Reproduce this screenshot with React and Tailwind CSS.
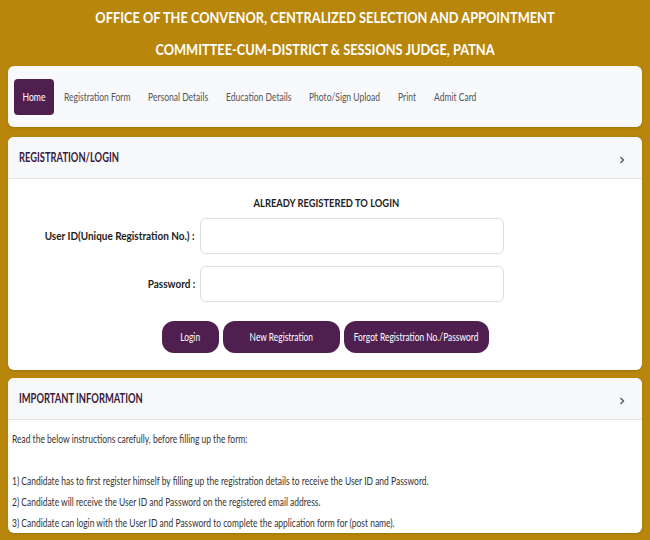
import React from 'react';

// widths measured off the reference so the condensed labels keep their spots
const navItems = [
  { label: 'Registration Form', w: 'w-[66px]' },
  { label: 'Personal Details', w: 'w-[60px]' },
  { label: 'Education Details', w: 'w-[65px]' },
  { label: 'Photo/Sign Upload', w: 'w-[71px]' },
  { label: 'Print', w: 'w-[18px]' },
  { label: 'Admit Card', w: 'w-[43px]' },
];

const instructions = [
  '1) Candidate has to first register himself by filling up the registration details to receive the User ID and Password.',
  '2) Candidate will receive the User ID and Password on the registered email address.',
  '3) Candidate can login with the User ID and Password to complete the application form for (post name).',
];

function Chevron() {
  return (
    <svg width="8" height="10" viewBox="0 0 8 10" className="text-gray-600">
      <path d="M2.5 2 L5.5 5 L2.5 8" fill="none" stroke="currentColor" strokeWidth="1.3" />
    </svg>
  );
}

function PanelHeader({ title }) {
  return (
    <div className="bg-[#f7f8fa] h-[42px] pl-[11px] pr-[16px] flex items-center justify-between border-b border-[#e3e4e8]">
      <span className="inline-block whitespace-nowrap origin-left scale-x-[0.72] font-bold text-[13px] text-[#3a1a3a]">{title}</span>
      <span className="pt-1"><Chevron /></span>
    </div>
  );
}

function PurpleButton({ w, children }) {
  return (
    <button className={`bg-[#4f1f4f] rounded-[12px] h-[32px] ${w} flex items-center justify-center`}>
      <span className="inline-block shrink-0 whitespace-nowrap scale-x-[0.7]">{children}</span>
    </button>
  );
}

export default function App() {
  return (
    <div className="min-h-[540px] bg-[#b8860b] px-2 pb-4 font-['Lato',sans-serif]">
      {/* Title */}
      <div className="pt-[1px] pb-[1px] text-center text-white font-bold text-[16px] leading-[32px]">
        <div className="whitespace-nowrap scale-x-[0.8]">OFFICE OF THE CONVENOR, CENTRALIZED SELECTION AND APPOINTMENT</div>
        <div className="whitespace-nowrap scale-x-[0.8]">COMMITTEE-CUM-DISTRICT &amp; SESSIONS JUDGE, PATNA</div>
      </div>

      {/* Nav */}
      <div className="bg-[#f8f9fc] rounded-md h-[61px] px-[6px] flex items-center gap-[10px] shadow-sm">
        <div className="bg-[#4f1f4f] text-white rounded-[4px] h-[36px] w-[40px] flex items-center justify-center text-[12px]">
          <span className="inline-block scale-x-[0.72]">Home</span>
        </div>
        <div className="flex items-center gap-[18px] text-[12px] text-[#555]">
          {navItems.map((n) => (
            <span key={n.label} className={`${n.w} shrink-0`}>
              <span className="inline-block whitespace-nowrap origin-left scale-x-[0.71]">{n.label}</span>
            </span>
          ))}
        </div>
      </div>

      {/* Registration card */}
      <div className="mt-[10px] bg-white rounded-md overflow-hidden shadow-sm">
        <PanelHeader title="REGISTRATION/LOGIN" />
        <div className="pt-[12px] pb-[17px]">
          <div className="text-center font-bold text-[12px] text-[#222] leading-[24px] pl-[2px]">
            <span className="inline-block whitespace-nowrap scale-x-[0.78]">ALREADY REGISTERED TO LOGIN</span>
          </div>
          <div className="mt-[3px] flex items-center">
            <label className="w-[189px] text-right font-bold text-[12px] text-[#222] pr-[2px]">
              <span className="inline-block whitespace-nowrap origin-right scale-x-[0.83]">User ID(Unique Registration No.) :</span>
            </label>
            <div className="ml-[3px] w-[304px] h-[36px] border border-[#dcdde2] rounded-md bg-white"></div>
          </div>
          <div className="mt-[12px] flex items-center">
            <label className="w-[189px] text-right font-bold text-[12px] text-[#222] pr-[2px]">
              <span className="inline-block whitespace-nowrap origin-right scale-x-[0.83]">Password :</span>
            </label>
            <div className="ml-[3px] w-[304px] h-[36px] border border-[#dcdde2] rounded-md bg-white"></div>
          </div>
          <div className="mt-[19px] flex justify-center gap-[4px] text-[12px] text-white">
            <PurpleButton w="w-[57px]">Login</PurpleButton>
            <PurpleButton w="w-[117px]">New Registration</PurpleButton>
            <PurpleButton w="w-[145px]">Forgot Registration No./Password</PurpleButton>
          </div>
        </div>
      </div>

      {/* Important information */}
      <div className="mt-[8px] bg-white rounded-md overflow-hidden shadow-sm">
        <PanelHeader title="IMPORTANT INFORMATION" />
        <div className="px-[4px] pt-[8px] text-[11px] text-[#333] leading-[21px]">
          <div className="whitespace-nowrap origin-left scale-x-[0.77]">Read the below instructions carefully, before filling up the form:</div>
          <div className="h-[21px]"></div>
          {instructions.map((t) => (
            <div key={t} className="whitespace-nowrap origin-left scale-x-[0.77]">{t}</div>
          ))}
        </div>
      </div>
    </div>
  );
}
